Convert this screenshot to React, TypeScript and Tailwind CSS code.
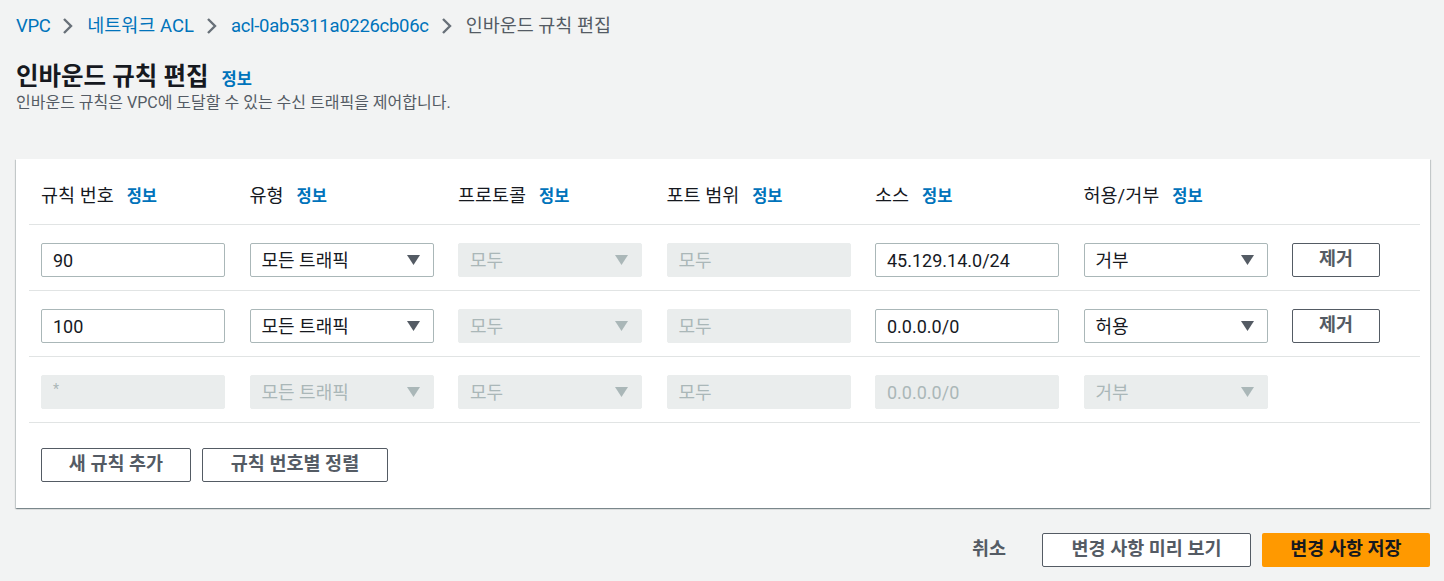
import React from 'react';

const FONT = { fontFamily: 'Roboto, "Noto Sans CJK KR", sans-serif' };

type Cell =
  | { kind: 'input'; value: string; disabled?: boolean }
  | { kind: 'select'; value: string; disabled?: boolean }
  | { kind: 'remove' }
  | { kind: 'empty' };

const headers = ['규칙 번호', '유형', '프로토콜', '포트 범위', '소스', '허용/거부'];

const rows: Cell[][] = [
  [
    { kind: 'input', value: '90' },
    { kind: 'select', value: '모든 트래픽' },
    { kind: 'select', value: '모두', disabled: true },
    { kind: 'input', value: '모두', disabled: true },
    { kind: 'input', value: '45.129.14.0/24' },
    { kind: 'select', value: '거부' },
    { kind: 'remove' },
  ],
  [
    { kind: 'input', value: '100' },
    { kind: 'select', value: '모든 트래픽' },
    { kind: 'select', value: '모두', disabled: true },
    { kind: 'input', value: '모두', disabled: true },
    { kind: 'input', value: '0.0.0.0/0' },
    { kind: 'select', value: '허용' },
    { kind: 'remove' },
  ],
  [
    { kind: 'input', value: '*', disabled: true },
    { kind: 'select', value: '모든 트래픽', disabled: true },
    { kind: 'select', value: '모두', disabled: true },
    { kind: 'input', value: '모두', disabled: true },
    { kind: 'input', value: '0.0.0.0/0', disabled: true },
    { kind: 'select', value: '거부', disabled: true },
    { kind: 'empty' },
  ],
];

function Chevron() {
  return (
    <svg width="13" height="18" viewBox="0 0 13 18" className="ml-[11px] mr-[13px] shrink-0">
      <path d="M3 2 L10 9 L3 16" fill="none" stroke="#687078" strokeWidth="2.4" />
    </svg>
  );
}

function Info() {
  return <span className="text-[16.5px] font-bold text-[#0073bb] ml-[13px]">정보</span>;
}

function Field({ cell }: { cell: Cell }) {
  if (cell.kind === 'remove') {
    return (
      <button className="h-[34px] w-[88px] border border-[#545b64] rounded-[2px] bg-white text-[18.5px] font-bold text-[#545b64]">
        제거
      </button>
    );
  }
  if (cell.kind === 'empty') return <div className="h-[34px]" />;

  const base = cell.disabled
    ? 'bg-[#eaeded] border-[#eaeded] text-[#aab7b8]'
    : 'bg-white border-[#aab7b8] text-[#16191f]';

  return (
    <div
      className={`h-[34px] w-[184px] border rounded-[2px] flex items-center justify-between pl-[11px] pr-[13px] text-[18px] ${base}`}
    >
      <span className={cell.value === '*' ? 'text-[14px] -mt-[6px]' : ''}>{cell.value}</span>
      {cell.kind === 'select' && (
        <svg width="13" height="10" viewBox="0 0 13 10">
          <polygon points="0,0 13,0 6.5,10" fill={cell.disabled ? '#aab7b8' : '#545b64'} />
        </svg>
      )}
    </div>
  );
}

export default function App() {
  return (
    <div className="min-h-screen bg-[#f2f3f3] pl-[16px] pr-[14px] text-[#16191f]" style={FONT}>
      {/* breadcrumb */}
      <div className="flex items-center pt-[14px] h-[38px] text-[18.5px] leading-[24px]">
        <span className="text-[#0073bb] tracking-[-0.4px]">VPC</span>
        <Chevron />
        <span className="text-[#0073bb]">네트워크 ACL</span>
        <Chevron />
        <span className="text-[#0073bb] tracking-[-0.3px]">acl-0ab5311a0226cb06c</span>
        <Chevron />
        <span className="text-[#545b64]">인바운드 규칙 편집</span>
      </div>

      <div className="mt-[25px] flex items-baseline h-[28px]">
        <h1 className="text-[24.5px] leading-[28px] font-bold">인바운드 규칙 편집</h1>
        <Info />
      </div>
      <p className="mt-[2px] text-[16px] leading-[20px] text-[#545b64]">
        인바운드 규칙은 VPC에 도달할 수 있는 수신 트래픽을 제어합니다.
      </p>

      {/* rules card */}
      <div className="mt-[46px] bg-white shadow-[0_1px_1px_0_rgba(0,28,36,0.3),1px_1px_1px_0_rgba(0,28,36,0.15),-1px_1px_1px_0_rgba(0,28,36,0.15)]">
        <div className="ml-[13px] mr-[10px]">
          <div className="grid grid-cols-[repeat(6,208.5px)_1fr] pt-[26px] pb-[16px]">
            {headers.map((h) => (
              <div key={h} className="px-[12px] flex items-baseline text-[18.5px] leading-[22px]">
                <span>{h}</span>
                <Info />
              </div>
            ))}
            <div />
          </div>
          {rows.map((row, i) => (
            <div
              key={i}
              className="grid grid-cols-[repeat(6,208.5px)_1fr] border-t border-[#e1e4e4] pt-[18px] pb-[13px]"
            >
              {row.map((cell, j) => (
                <div key={j} className="px-[12px]">
                  <Field cell={cell} />
                </div>
              ))}
            </div>
          ))}
          <div className="border-t border-[#e1e4e4] pt-[25px] pb-[26px] pl-[12px] flex gap-[11px]">
            <button className="h-[34px] w-[150px] border border-[#545b64] rounded-[2px] bg-white text-[18.5px] font-bold text-[#545b64]">
              새 규칙 추가
            </button>
            <button className="h-[34px] w-[186px] border border-[#545b64] rounded-[2px] bg-white text-[18.5px] font-bold text-[#545b64]">
              규칙 번호별 정렬
            </button>
          </div>
        </div>
      </div>

      {/* footer actions */}
      <div className="mt-[25px] flex justify-end items-center">
        <button className="text-[18.5px] font-bold text-[#545b64] mr-[36px]">취소</button>
        <button className="h-[34px] w-[209px] border border-[#545b64] rounded-[2px] bg-white text-[18.5px] font-bold text-[#545b64] mr-[11px]">
          변경 사항 미리 보기
        </button>
        <button className="h-[34px] w-[168px] rounded-[2px] bg-[#ff9900] text-[18.5px] font-bold text-[#16191f]">
          변경 사항 저장
        </button>
      </div>
    </div>
  );
}
